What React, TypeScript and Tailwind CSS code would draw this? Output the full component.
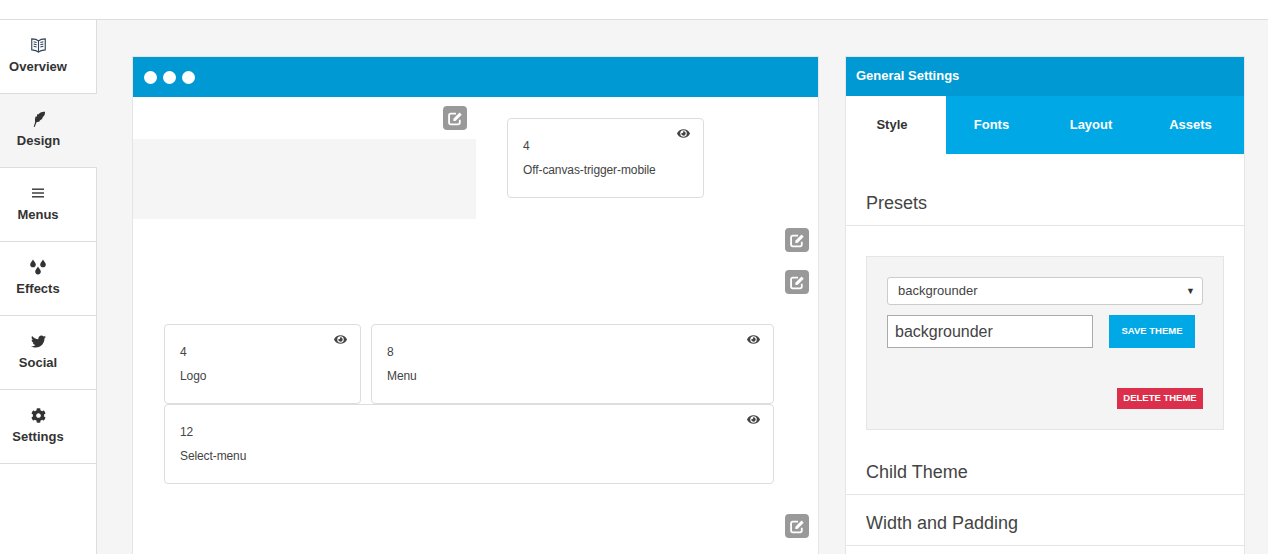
import { FaCog, FaEye, FaTwitter } from 'react-icons/fa'
import type { ReactNode } from 'react'

function BookIcon() {
  return (
    <svg width="15" height="15" viewBox="0 0 16 16" fill="none" stroke="#2f4358" strokeWidth="1.2">
      <path d="M8 3C6.5 1.7 3.6 1 .8.9v11.8c2.8.2 5.7 1 7.2 2.4 1.5-1.4 4.4-2.2 7.2-2.4V.9C12.4 1 9.5 1.7 8 3z" />
      <path d="M8 3v12M2.8 4l3.2.8M2.8 6.4l3.2.8M2.8 8.8l3.2.8M13.2 4l-3.2.8M13.2 6.4l-3.2.8M13.2 8.8l-3.2.8" />
    </svg>
  )
}

function FeatherIcon() {
  return (
    <svg width="12" height="16" viewBox="0 0 12 16" fill="#333">
      <path d="M12 .8c.2 2.600-1 4.600-2.600 5.400l.5.4c-.7 1.600-2 2.500-3.300 2.800l.4.6c-1 .9-2.100 1.200-3.200 1L3 12.600 1.700 16l-1-.2 1.400-4.600C1.700 8.300 2.200 6.200 3 5l.9 1 .3-3 1 .6C6.500 1.700 9.500.2 12 .8z" />
    </svg>
  )
}

function DropsIcon() {
  return (
    <svg width="16" height="16" viewBox="0 0 16 16" fill="#333">
      <path d="M3 .4C3.800 2.200 5.800 3.400 5.800 5.400a2.800 2.800 0 0 1-5.600 0C.2 3.400 2.200 2.200 3 .4z" />
      <path d="M13 .4c.8 1.800 2.800 3 2.800 5a2.800 2.800 0 0 1-5.600 0c0-2 2-3.200 2.800-5z" />
      <path d="M8 7.400c.8 1.800 2.800 3 2.800 5.200a2.800 2.800 0 0 1-5.600 0c0-2.200 2-3.400 2.800-5.200z" />
    </svg>
  )
}

function BarsIcon() {
  return (
    <svg width="12" height="10" viewBox="0 0 12 10" fill="#333">
      <rect y="0.5" width="12" height="1.4" />
      <rect y="4.3" width="12" height="1.4" />
      <rect y="8.1" width="12" height="1.4" />
    </svg>
  )
}

function EditIcon() {
  return (
    <svg width="15" height="15" viewBox="0 0 14 14" fill="none">
      <path d="M11 8.200v2.600A1.700 1.700 0 0 1 9.300 12.500H2.700A1.700 1.700 0 0 1 1 10.800V4.200A1.700 1.700 0 0 1 2.700 2.500H7.500" stroke="#fff" strokeWidth="1.700" />
      <path d="M5 7.300 10.800 1.500l2 2L7 9.300H5z" fill="#fff" />
    </svg>
  )
}

const navItems: { label: string; icon: ReactNode; active?: boolean }[] = [
  { label: 'Overview', icon: <BookIcon /> },
  { label: 'Design', icon: <FeatherIcon />, active: true },
  { label: 'Menus', icon: <BarsIcon /> },
  { label: 'Effects', icon: <DropsIcon /> },
  { label: 'Social', icon: <FaTwitter size={15} color="#333" /> },
  { label: 'Settings', icon: <FaCog size={15} color="#333" /> },
]

function EditButton() {
  return (
    <button className="w-6 h-6 rounded-sm bg-[#999] flex items-center justify-center">
      <EditIcon />
    </button>
  )
}

function BlockCard({ size, name, className }: { size: string; name: string; className: string }) {
  return (
    <div className={`relative h-20 shrink-0 rounded border border-[#ddd] bg-white pl-[15px] pt-[18px] text-xs tracking-[-0.1px] text-[#444] ${className}`}>
      <FaEye size={13} className="absolute right-[13px] top-[8px] text-[#444]" />
      <div className="h-[18px] leading-[18px]">{size}</div>
      <div className="mt-[6px] h-[18px] leading-[18px]">{name}</div>
    </div>
  )
}

export default function App() {
  return (
    <div className="h-[554px] w-[1268px] overflow-hidden bg-[#f5f5f5] font-['Liberation_Sans',Arial,sans-serif]">
      <div className="h-5 bg-white border-b border-[#ddd]" />
      <div className="flex">
        {/* sidebar */}
        <div className="w-[97px] h-[534px] shrink-0 flex flex-col">
          {navItems.map(item => (
            <div key={item.label}
              className={`h-[74px] border-b border-[#ddd] flex flex-col items-center pt-[17px] pr-5 text-[13px] font-bold text-[#333] ${item.active ? 'bg-[#f5f5f5]' : 'bg-white border-r'}`}>
              <div className="h-4 flex items-center justify-center">{item.icon}</div>
              <div className="mt-[4px] leading-[20px]">{item.label}</div>
            </div>
          ))}
          <div className="flex-1 bg-white border-r border-[#ddd]" />
        </div>

        {/* preview panel */}
        <div className="ml-[35px] mt-9 w-[687px] h-[600px] shrink-0 bg-white border-x border-t border-[#e5e5e5]">
          <div className="h-10 bg-[#0099d3] flex items-center gap-[6px] pl-[11px]">
            <span className="w-[13px] h-[13px] rounded-full bg-white" />
            <span className="w-[13px] h-[13px] rounded-full bg-white" />
            <span className="w-[13px] h-[13px] rounded-full bg-white" />
          </div>
          <div className="flex">
            <div className="w-[343px] shrink-0">
              <div className="h-[42px] pt-[9px] pl-[310px]"><EditButton /></div>
              <div className="h-20 bg-[#f5f5f5]" />
            </div>
            <div className="pt-[21px] pl-[31px]">
              <BlockCard size="4" name="Off-canvas-trigger-mobile" className="w-[197px]" />
            </div>
          </div>
          <div className="flex flex-col items-end pr-[9px] pt-[9px] gap-[18px]">
            <EditButton />
            <EditButton />
          </div>
          <div className="pl-[31px] pt-[30px]">
            <div className="flex gap-[10px]">
              <BlockCard size="4" name="Logo" className="w-[197px]" />
              <BlockCard size="8" name="Menu" className="w-[403px]" />
            </div>
            <BlockCard size="12" name="Select-menu" className="w-[610px]" />
          </div>
          <div className="flex justify-end pr-[9px] pt-[30px]"><EditButton /></div>
        </div>

        {/* settings panel */}
        <div className="ml-[26px] mt-9 w-[400px] h-[600px] shrink-0 bg-white border-x border-t border-[#e5e5e5]">
          <div className="h-[39px] bg-[#0099d3] pl-[10px] pb-[2px] flex items-center text-[13px] font-bold text-white">General Settings</div>
          <div className="flex h-[58px] bg-[#00a8e6] text-[13px] font-bold text-white">
            <div className="w-[100px] pr-2 bg-white text-[#333] flex items-center justify-center">Style</div>
            <div className="w-[91px] flex items-center justify-center">Fonts</div>
            <div className="w-[108px] flex items-center justify-center">Layout</div>
            <div className="w-[91px] flex items-center justify-center">Assets</div>
          </div>

          <div className="h-[72px] border-b border-[#e5e5e5] pl-5 pt-[37px] text-lg leading-[24px] text-[#444]">Presets</div>
          <div className="mx-5 mt-[30px] h-[174px] w-[358px] border border-[#e5e5e5] bg-[#f4f4f4] pl-5 pt-5">
            <div className="w-[316px] h-[28px] rounded-[3px] border border-[#ccc] bg-white pl-[10px] pr-[7px] flex items-center justify-between text-[13px] text-[#444]">
              <span>backgrounder</span>
              <span className="text-[9px] leading-none text-[#333]">▼</span>
            </div>
            <div className="flex mt-[10px]">
              <div className="w-[206px] h-[33px] border border-[#aaa] bg-white pl-[7px] flex items-center text-base text-[#444]">backgrounder</div>
              <div className="ml-4 w-[86px] h-[33px] bg-[#00a8e6] flex items-center justify-center text-[9.5px] font-bold text-white">SAVE THEME</div>
            </div>
            <div className="flex justify-end mt-[40px] w-[316px]">
              <div className="w-[86px] h-[21px] bg-[#dc2f4b] flex items-center justify-center text-[9.5px] font-bold text-white">DELETE THEME</div>
            </div>
          </div>
          <div className="h-[65px] border-b border-[#e5e5e5] pl-5 pt-[30px] text-lg leading-[24px] text-[#444]">Child Theme</div>
          <div className="h-[51px] border-b border-[#e5e5e5] pl-5 pt-4 text-lg leading-[24px] text-[#444]">Width and Padding</div>
        </div>
      </div>
    </div>
  )
}
